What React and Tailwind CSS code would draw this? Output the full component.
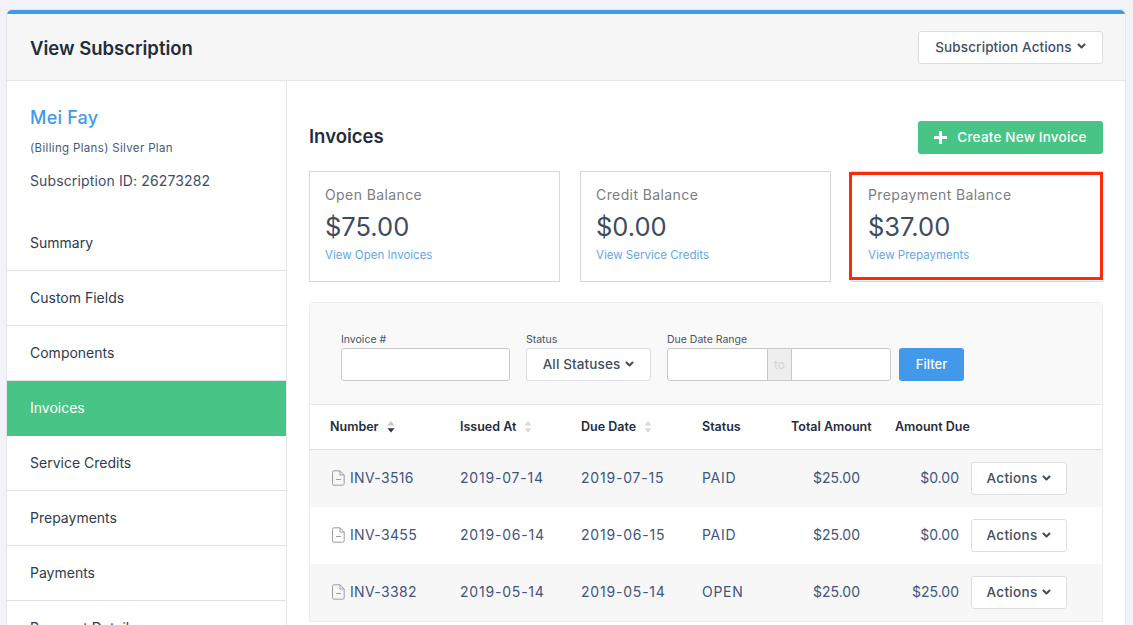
import React from "react";

const Chevron = ({ className = "" }) => (
  <svg viewBox="0 0 12 8" className={className} fill="none" stroke="currentColor" strokeWidth="2.8" strokeLinecap="round" strokeLinejoin="round">
    <path d="M2 2l4 4 4-4" />
  </svg>
);
const Sort = ({ active }) => (
  <svg viewBox="0 0 8 14" className="w-[8px] h-[14px] ml-[8px]">
    <path d="M4 1l3.6 4.4H.4z" fill={active ? "#c2c6cc" : "#d5d8dc"} />
    <path d="M4 12.6l3.6-4.4H.4z" fill={active ? "#2d3748" : "#d5d8dc"} />
  </svg>
);
const Doc = () => (
  <svg viewBox="0 0 13 16" className="w-[13px] h-[16px] mr-[5px] shrink-0" fill="none" stroke="#9a9ea5" strokeWidth="1">
    <path d="M2 .8h6l4.2 4.2v8.7a1.5 1.5 0 0 1-1.5 1.5H2a1.5 1.5 0 0 1-1.5-1.5V2.3A1.5 1.5 0 0 1 2 .8z" />
    <path d="M8 .8V5h4.2M4 9.5h5" />
  </svg>
);

const nav = ["Summary", "Custom Fields", "Components", "Invoices", "Service Credits", "Prepayments", "Payments", "Payment Details"];
const cards = [
  { t: "Open Balance", v: "$75.00", l: "View Open Invoices" },
  { t: "Credit Balance", v: "$0.00", l: "View Service Credits" },
];
const rows = [
  ["INV-3516", "2019-07-14", "2019-07-15", "PAID", "$25.00", "$0.00", "bg-[#f7f7f7]"],
  ["INV-3455", "2019-06-14", "2019-06-15", "PAID", "$25.00", "$0.00", "bg-white"],
  ["INV-3382", "2019-05-14", "2019-05-14", "OPEN", "$25.00", "$25.00", "bg-[#f7f7f7]"],
];

export default function App() {
  return (
    <div className="h-[625px] overflow-hidden bg-[#f1f3f8] pt-[10px] pl-[7px] pr-[8px] font-['Inter','Liberation_Sans',sans-serif] text-[#2d3748]">
      <div className="w-[1118px] h-[640px] bg-white rounded-t-[5px] border-t-[4px] border-[#4299e9] shadow-[0_0_0_1px_#e4e6e9]">
        <header className="h-[67px] bg-[#f6f6f7] border-b border-[#e6e6e6] flex items-center justify-between pl-[23px] pr-[22px]">
          <h1 className="text-[18.5px] pt-[4px] font-semibold text-[#1f2d3d]">View Subscription</h1>
          <button className="h-[33px] w-[185px] bg-white border border-[#dcdee0] rounded-[3px] flex items-center justify-center text-[13.5px] tracking-[0.12px] font-medium text-[#434e5e]">
            Subscription Actions
            <Chevron className="w-[9px] h-[6px] ml-[5px] mb-[2px]" />
          </button>
        </header>
        <div className="flex">
          <aside className="w-[280px] shrink-0 border-r border-[#e6e6e6]">
            <div className="pl-[23px] pt-[26px] h-[135px]">
              <div className="text-[18px] leading-[22px] font-medium tracking-[0.2px] text-[#4299e9]">Mei Fay</div>
              <div className="mt-[11px] text-[11.5px] leading-[16px] tracking-[0.34px] text-[#4a5a78]">(Billing Plans) Silver Plan</div>
              <div className="mt-[16px] text-[14px] leading-[18px] tracking-[0.13px] text-[#3e4c68]">Subscription ID: 26273282</div>
            </div>
            {nav.map((n) => (
              <div
                key={n}
                className={`h-[55px] pl-[23px] pb-[2px] flex items-center text-[14px] border-b ${n === "Invoices" ? "bg-[#48c586] text-white border-[#48c586]" : "text-[#2f3b4e] border-[#e2e2e2]"}`}
              >
                {n}
              </div>
            ))}
          </aside>
          <main className="flex-1 pl-[22px] pr-[22px]">
            <div className="flex items-center justify-between mt-[40px] h-[33px]">
              <h2 className="text-[18.5px] pb-[2px] font-semibold text-[#1f2d3d]">Invoices</h2>
              <button className="w-[185px] h-[33px] bg-[#48c586] rounded-[3px] text-white text-[13.5px] tracking-[0.2px] font-medium flex items-center justify-center">
                <svg viewBox="0 0 14 14" className="w-[13px] h-[13px] mr-[10px]" fill="white"><path d="M5.4 0h3.2v5.4H14v3.2H8.6V14H5.4V8.6H0V5.4h5.4z" /></svg>
                Create New Invoice
              </button>
            </div>
            <div className="flex mt-[17px] h-[111px]">
              {cards.map((c) => (
                <div key={c.t} className="w-[251px] mr-[20px] border border-[#d8d8d8] pl-[15px] pt-[14px]">
                  <div className="text-[14px] leading-[18px] tracking-[0.4px] text-[#7b7e83]">{c.t}</div>
                  <div className="text-[25.5px] leading-[30px] mt-[8px] text-[#3f4c5e]">{c.v}</div>
                  <div className="text-[11.5px] leading-[14px] mt-[6px] text-[#5fa8ec]">{c.l}</div>
                </div>
              ))}
              <div className="relative w-[252px] border border-[#d8d8d8] pl-[16px] pt-[14px]">
                <div className="text-[14px] leading-[18px] tracking-[0.4px] text-[#7b7e83]">Prepayment Balance</div>
                <div className="text-[25.5px] leading-[30px] mt-[8px] text-[#3f4c5e]">$37.00</div>
                <div className="text-[11.5px] leading-[14px] mt-[6px] text-[#5fa8ec]">View Prepayments</div>
                <div className="absolute left-[-3px] top-0 w-[254px] h-[108px] border-[3px] border-[#fb2a0a]" />
              </div>
            </div>
            <div className="mt-[20px] border border-[#ececec] rounded-t-[5px]">
              <div className="h-[102px] bg-[#f9f9f9] rounded-t-[5px] border-b border-[#e8e8e8] pl-[31px] pt-[29px] flex items-start">
                <div className="w-[185px]">
                  <div className="text-[10.5px] leading-[15px] text-[#4a5360]">Invoice #</div>
                  <div className="mt-[1px] w-[169px] h-[33px] bg-white border border-[#c9c9c9] rounded-[3px]" />
                </div>
                <div className="w-[141px]">
                  <div className="text-[10.5px] leading-[15px] text-[#4a5360]">Status</div>
                  <div className="mt-[1px] w-[125px] h-[33px] bg-white border border-[#dcdee0] rounded-[3px] flex items-center justify-center text-[13.5px] tracking-[0.12px] font-medium text-[#434e5e]">
                    All Statuses
                    <Chevron className="w-[9px] h-[6px] ml-[5px] mb-[2px]" />
                  </div>
                </div>
                <div className="w-[232px]">
                  <div className="text-[10.5px] leading-[15px] text-[#4a5360]">Due Date Range</div>
                  <div className="mt-[1px] w-[224px] h-[33px] bg-white border border-[#c9c9c9] rounded-[3px] flex">
                    <div className="w-[99px]" />
                    <div className="w-[25px] bg-[#eeeeee] border-x border-[#c9c9c9] flex items-center justify-center text-[12px] text-[#d4d4d4]">to</div>
                  </div>
                </div>
                <button className="mt-[16px] w-[65px] h-[33px] bg-[#4299e9] rounded-[3px] text-white text-[13px] font-medium">Filter</button>
              </div>
              <div className="h-[45px] border-b border-[#dedede] flex items-center pl-[20px] text-[12.5px] font-semibold text-[#1f2d3d]">
                <div className="w-[130px] flex items-center">Number<Sort active /></div>
                <div className="w-[121px] flex items-center">Issued At<Sort /></div>
                <div className="w-[121px] flex items-center">Due Date<Sort /></div>
                <div className="w-[89px]">Status</div>
                <div className="w-[104px]">Total Amount</div>
                <div>Amount Due</div>
              </div>
              {rows.map((r) => (
                <div key={r[0]} className={`h-[57px] flex items-center pl-[22px] text-[14px] text-[#3f5480] ${r[6]}`}>
                  <div className="w-[128px] flex items-center pb-[2px] tracking-[0.35px]"><Doc />{r[0]}</div>
                  <div className="w-[121px] pb-[2px] tracking-[0.8px]">{r[1]}</div>
                  <div className="w-[121px] pb-[2px] tracking-[0.8px]">{r[2]}</div>
                  <div className="w-[70px] pb-[2px] tracking-[0.7px]">{r[3]}</div>
                  <div className="w-[88px] text-right pb-[2px]">{r[4]}</div>
                  <div className="w-[99px] text-right pb-[2px]">{r[5]}</div>
                  <button className="ml-[12px] w-[96px] h-[33px] bg-white border border-[#dcdee0] rounded-[3px] flex items-center justify-center text-[13.5px] tracking-[0.3px] font-medium text-[#434e5e]">
                    Actions
                    <Chevron className="w-[9px] h-[6px] ml-[5px] mb-[2px]" />
                  </button>
                </div>
              ))}
            </div>
          </main>
        </div>
      </div>
    </div>
  );
}
